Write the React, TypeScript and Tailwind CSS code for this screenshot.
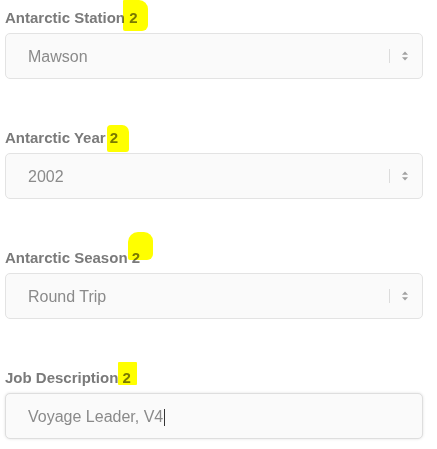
import * as React from "react"

interface FieldProps {
  label: string
  value: string
  select?: boolean
  focused?: boolean
}

function SelectArrows() {
  return (
    <div className="flex items-center h-full">
      <div className="w-px h-[14px] bg-[#dcdcdc]" />
      <svg width="8" height="12" viewBox="0 0 8 12" className="ml-[11px] mr-[13px]">
        <path d="M4 1.5 L7 4.8 L1 4.8 Z" fill="#a0a0a0" />
        <path d="M4 10.5 L7 7.2 L1 7.2 Z" fill="#a0a0a0" />
      </svg>
    </div>
  )
}

function Field({ label, value, select, focused }: FieldProps) {
  return (
    <div className="flex flex-col">
      <label className="h-[20px] leading-[20px] mb-[5px] text-[15px] font-bold text-[#7a7a7a]">
        {label} 2
      </label>
      <div
        className={
          focused
            ? "h-[46px] flex items-center justify-between rounded-[5px] border border-[#dedede] bg-[#fafafa] shadow-[0_0_3px_rgba(0,0,0,0.12)]"
            : "h-[46px] flex items-center justify-between rounded-[5px] border border-[#e3e3e3] bg-[#fafafa]"
        }
      >
        <span className="pl-[22px] pt-[2px] text-[16px] text-[#8a8a8a] flex items-center">
          {value}
          {focused && <span className="inline-block w-px h-[17px] bg-[#333] ml-[1px]" />}
        </span>
        {select && <SelectArrows />}
      </div>
    </div>
  )
}

export default function App() {
  return (
    <div
      className="relative w-[437px] h-[449px] bg-white overflow-hidden"
      style={{ fontFamily: '"Liberation Sans", Arial, sans-serif' }}
    >
      <div className="pt-[8px] pl-[5px] w-[423px] flex flex-col gap-[49px]">
        <Field label="Antarctic Station" value="Mawson" select />
        <Field label="Antarctic Year" value="2002" select />
        <Field label="Antarctic Season" value="Round Trip" select />
        <Field label="Job Description" value="Voyage Leader, V4" focused />
      </div>

      {/* marker highlights over the "2"s */}
      <span className="absolute left-[123px] top-0 w-[25px] h-[31px] bg-[#ffff00] mix-blend-multiply rounded-[1px_9px_6px_2px]" />
      <span className="absolute left-[107px] top-[125px] w-[22px] h-[27px] bg-[#ffff00] mix-blend-multiply rounded-[4px_7px_3px_2px]" />
      <span className="absolute left-[128px] top-[232px] w-[25px] h-[28px] bg-[#ffff00] mix-blend-multiply rounded-[10px_9px_6px_2px]" />
      <span className="absolute left-[118px] top-[362px] w-[19px] h-[23px] bg-[#ffff00] mix-blend-multiply rounded-[1px]" />
    </div>
  )
}
